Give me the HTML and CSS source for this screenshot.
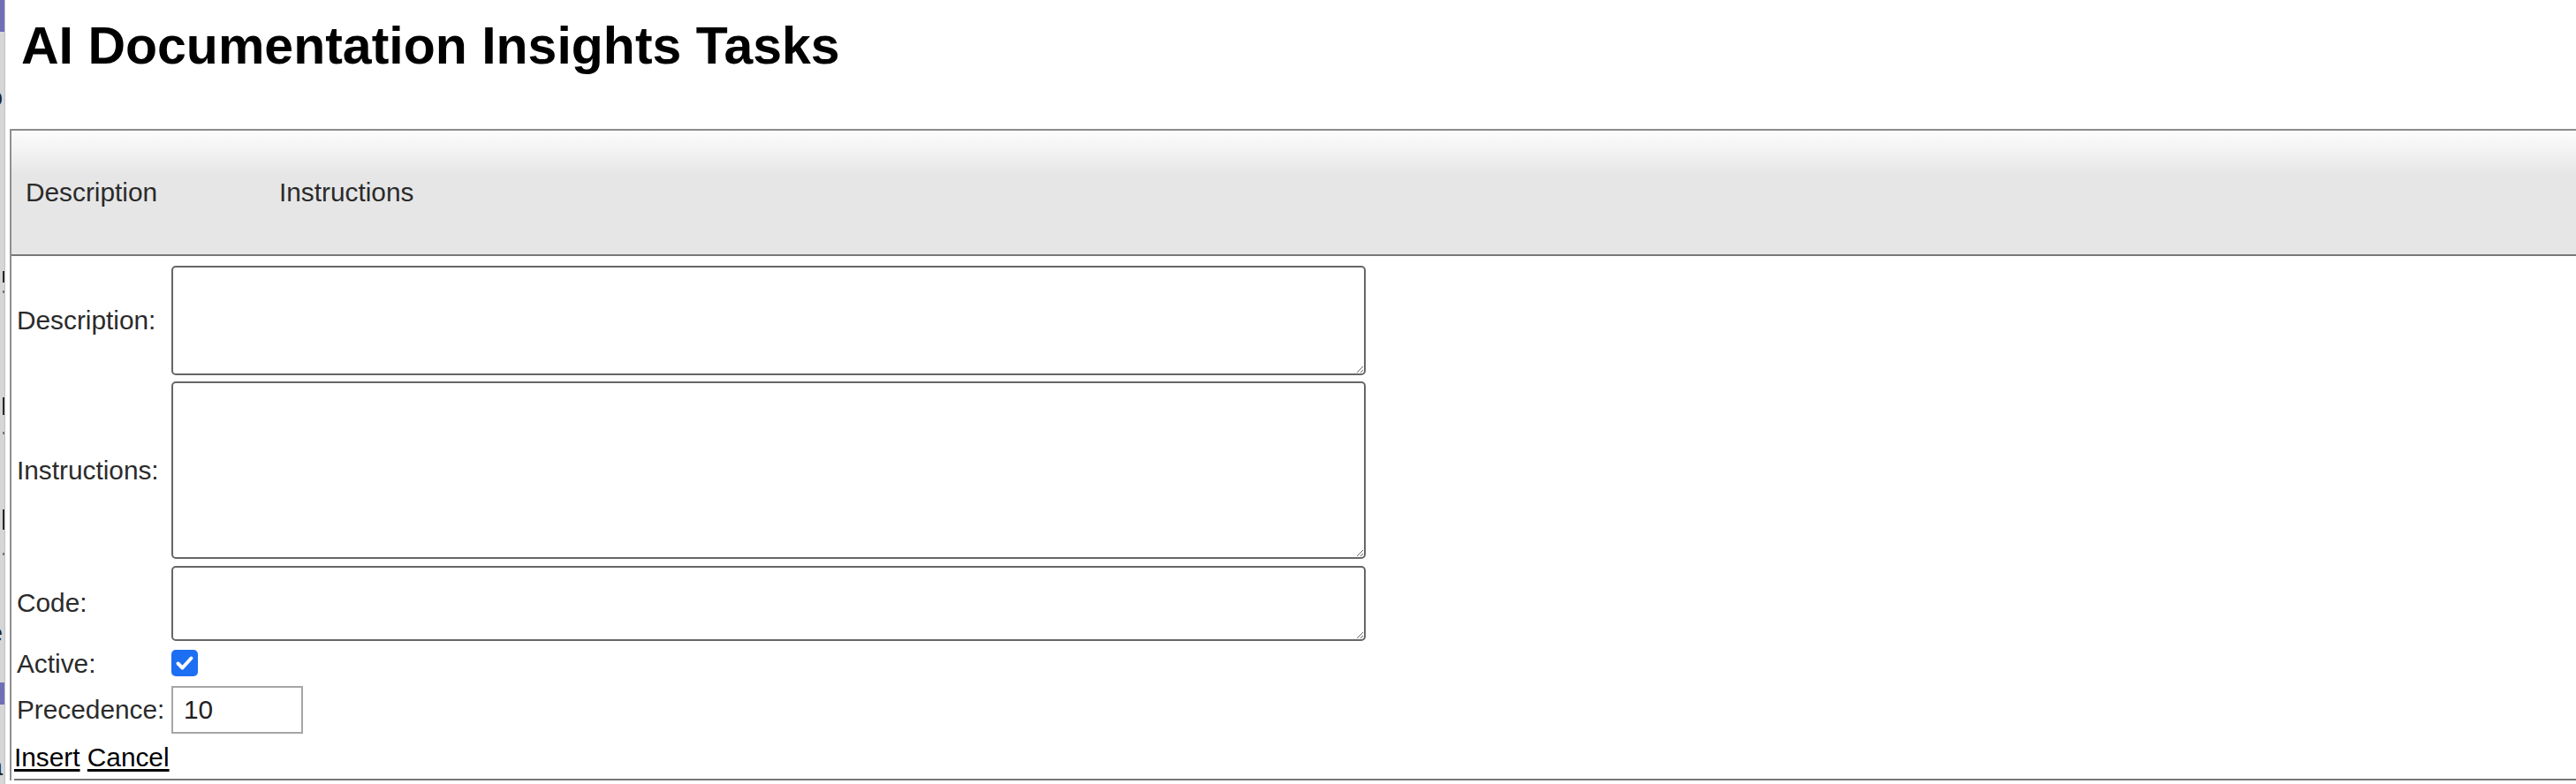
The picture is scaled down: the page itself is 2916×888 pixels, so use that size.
FILE: index.html
```html
<!DOCTYPE html>
<html lang="en">
<head>
<meta charset="utf-8">
<title>AI Documentation Insights Tasks</title>
<link rel="stylesheet" href="styles.css">
</head>
<body>
<div class="page">
  <nav class="sidebar">
    <div class="side-block side-block-top"></div>
    <div class="side-text side-info">Info</div>
    <div class="side-mark mark-a"></div>
    <div class="side-dot dot-a"></div>
    <div class="side-mark mark-b"></div>
    <div class="side-dot dot-b"></div>
    <div class="side-mark mark-c"></div>
    <div class="side-dot dot-c"></div>
    <div class="side-text side-queue">Queue</div>
    <div class="side-block side-block-mid"></div>
    <div class="side-text side-data">Data</div>
  </nav>
  <main class="main">
    <h1 class="title">AI Documentation Insights Tasks</h1>
    <section class="grid">
      <div class="grid-head">
        <div class="th">Description</div>
        <div class="th">Instructions</div>
      </div>
      <form class="insert-form">
        <div class="fields">
          <label class="lbl" for="f-desc">Description:</label>
          <div class="ctl"><textarea id="f-desc" class="ta ta-desc"></textarea></div>

          <label class="lbl" for="f-instr">Instructions:</label>
          <div class="ctl"><textarea id="f-instr" class="ta ta-instr"></textarea></div>

          <label class="lbl" for="f-code">Code:</label>
          <div class="ctl"><textarea id="f-code" class="ta ta-code"></textarea></div>

          <span class="lbl">Active:</span>
          <div class="ctl">
            <span class="chk" role="checkbox" aria-checked="true">
              <svg width="30" height="30" viewBox="0 0 30 30" aria-hidden="true"><path d="M7.5 15.5 L12.5 20.5 L22.5 9.5" fill="none" stroke="#ffffff" stroke-width="4" stroke-linecap="round" stroke-linejoin="round"/></svg>
            </span>
          </div>

          <label class="lbl" for="f-prec">Precedence:</label>
          <div class="ctl"><input id="f-prec" class="num" type="text" value="10"></div>
        </div>
        <div class="actions"><a href="#" class="act">Insert</a> <a href="#" class="act">Cancel</a></div>
      </form>
    </section>
  </main>
</div>
</body>
</html>
```

FILE: styles.css
```css
html, body {
  margin: 0;
  padding: 0;
}

body {
  background: #ffffff;
  color: #2b2b2b;
  font-family: "Liberation Sans", Arial, Helvetica, sans-serif;
  font-size: 29.8px;
  overflow: hidden;
}

.page {
  display: flex;
  height: 888px;
}

/* clipped side navigation */
.sidebar {
  flex: none;
  width: 6px;
  box-sizing: border-box;
  background: #d6d6d6;
  border-right: 1px solid #c2c2c2;
  overflow: hidden;
  display: flex;
  flex-direction: column;
}

.side-block {
  flex: none;
  background: #6f6fb7;
}

.side-block-top { height: 36px; }
.side-block-mid { height: 25px; margin-top: 39px; }

.side-text {
  flex: none;
  display: flex;
  justify-content: flex-end;
  white-space: nowrap;
  padding-right: 2px;
  height: 34px;
  line-height: 34px;
  color: #222;
}

.side-info { margin-top: 57px; }
.side-queue { margin-top: 71px; }
.side-data { margin-top: 53px; }

.side-mark {
  flex: none;
  align-self: flex-end;
  width: 2px;
  background: #2a2a2a;
}

.side-dot {
  flex: none;
  align-self: flex-end;
  width: 2px;
  height: 3px;
  background: #777;
}

.mark-a { height: 13px; margin-top: 180px; }
.dot-a { margin-top: 9px; }
.mark-b { height: 20px; margin-top: 118px; }
.dot-b { margin-top: 19px; }
.mark-c { height: 23px; margin-top: 85px; }
.dot-c { margin-top: 26px; }

/* main content */
.main {
  flex: 1;
  min-width: 0;
  padding-left: 5px;
  overflow: hidden;
}

.title {
  margin: 18px 0 60px 13px;
  font-size: 59px;
  line-height: 68px;
  font-weight: bold;
  color: #000;
}

.grid {
  border-top: 2px solid #8c8c8c;
  border-left: 2px solid #8f8f8f;
}

.grid-head {
  display: grid;
  grid-template-columns: 287px 1fr;
  align-items: center;
  height: 140px;
  background: linear-gradient(to bottom, #fcfcfc 0px, #f3f3f3 22px, #e6e6e6 50px, #e6e6e6 100%);
  border-bottom: 2px solid #777;
}

.th {
  padding-left: 16px;
  line-height: 34px;
  color: #2b2b2b;
}

.insert-form {
  padding-top: 11px;
}

.fields {
  display: grid;
  grid-template-columns: 181px 1352px;
  row-gap: 7px;
  align-items: center;
}

.lbl {
  padding-left: 6px;
  line-height: 34px;
  color: #2b2b2b;
}

.ctl {
  display: flex;
  align-items: center;
}

.ta {
  display: block;
  box-sizing: border-box;
  width: 1352px;
  margin: 0;
  padding: 2px;
  border: 2px solid #666;
  border-radius: 5px;
  background: #fff;
  font-family: "Liberation Mono", monospace;
  font-size: 26px;
}

.ta-desc { height: 124px; }
.ta-instr { height: 201px; }
.ta-code { height: 85px; margin-top: 1px; }

.chk {
  display: block;
  width: 30px;
  height: 30px;
  margin: 3px 0 4px;
  border-radius: 5px;
  background: #1c6ff2;
}

.chk svg {
  display: block;
}

.num {
  box-sizing: border-box;
  width: 149px;
  height: 54px;
  margin: 0;
  padding: 0 0 0 12px;
  border: 2px solid #a6a6a6;
  border-radius: 0;
  background: #fff;
  color: #222;
  font-family: "Liberation Sans", Arial, sans-serif;
  font-size: 29.8px;
  outline: none;
}

.actions {
  margin: 10px 0 0 3px;
  padding-bottom: 7px;
  line-height: 34px;
  border-bottom: 2px solid #777;
}

.act {
  color: #000;
  text-decoration: underline;
  text-decoration-thickness: 3px;
  text-underline-offset: 3px;
}
```
